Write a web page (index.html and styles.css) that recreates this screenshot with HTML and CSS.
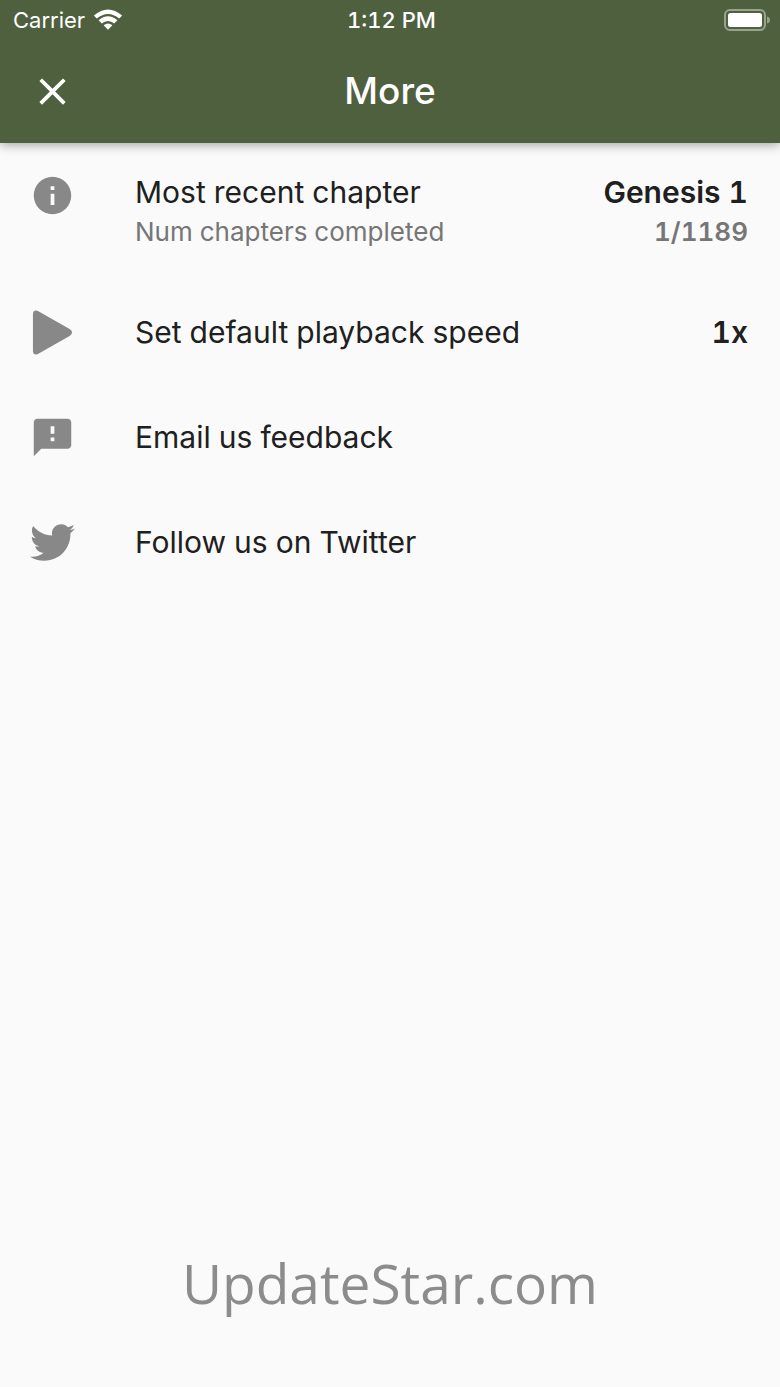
FILE: index.html
```html
<!DOCTYPE html>
<html lang="en">
<head>
<meta charset="utf-8">
<meta name="viewport" content="width=device-width, initial-scale=1">
<title>More</title>
<link rel="stylesheet" href="styles.css">
</head>
<body>
<div class="screen">
  <header class="top">
    <div class="status">
      <div class="carrier">
        <span>Carrier</span>
        <svg class="wifi" viewBox="0 0 30 22" aria-hidden="true">
          <path d="M.8 6.500Q15-5.500 29.200 6.500L26.200 9.600Q15 .6 3.800 9.600Z"/>
          <path d="M5.600 11.200Q15 3.400 24.400 11.200L21.200 14.500Q15 9.400 8.800 14.500Z"/>
          <path d="M10.600 16.300Q15 12.600 19.400 16.300L15 20.800Z"/>
        </svg>
      </div>
      <span class="time">1:12 PM</span>
      <svg class="battery" viewBox="0 0 46 22" aria-hidden="true">
        <rect class="battery-case" x="1" y="1" width="40" height="20" rx="5"/>
        <rect x="4" y="4" width="34" height="14" rx="2.500"/>
        <path class="battery-tip" d="M43 7.500Q46 8.500 46 11T43 14.500Z"/>
      </svg>
    </div>
    <div class="bar">
      <button class="close" type="button" aria-label="Close">
        <svg class="icon" viewBox="0 0 24 24" aria-hidden="true"><path d="M19 6.410L17.590 5 12 10.590 6.410 5 5 6.410 10.590 12 5 17.590 6.410 19 12 13.410 17.590 19 19 17.590 13.410 12z"/></svg>
      </button>
      <h1 class="title">More</h1>
    </div>
  </header>
  <main class="list">
    <div class="row row-tall">
      <svg class="icon" viewBox="0 0 24 24" aria-hidden="true"><path d="M12 2C6.480 2 2 6.480 2 12s4.480 10 10 10 10-4.480 10-10S17.520 2 12 2zm1 15h-2v-6h2v6zm0-8h-2V7h2v2z"/></svg>
      <div class="text">
        <div class="line"><span>Most recent chapter</span><strong>Genesis 1</strong></div>
        <div class="line line-small"><span>Num chapters completed</span><strong>1/1189</strong></div>
      </div>
    </div>
    <button class="row" type="button">
      <svg class="icon" viewBox="0 0 44 46" aria-hidden="true"><path d="M2 4.500Q2 .5 5 .5Q6.500.5 8 1.500L39.500 19.500Q42 21 42 23T39.500 26.500L8 44.500Q6.500 45.500 5 45.500Q2 45.500 2 41.500Z"/></svg>
      <span class="line"><span>Set default playback speed</span><strong>1x</strong></span>
    </button>
    <a class="row" href="#feedback">
      <svg class="icon" viewBox="0 0 24 24" aria-hidden="true"><path d="M20 2H4c-1.100 0-1.990.9-1.990 2L2 22l4-4h14c1.100 0 2-.9 2-2V4c0-1.100-.9-2-2-2zm-7 12h-2v-2h2v2zm0-4h-2V6h2v4z"/></svg>
      <span class="line">Email us feedback</span>
    </a>
    <a class="row" href="#twitter">
      <svg class="icon" viewBox="0 0 512 512" aria-hidden="true"><path d="M459.370 151.716c.325 4.548.325 9.097.325 13.645 0 138.720-105.583 298.558-298.558 298.558-59.452 0-114.680-17.219-161.137-47.106 8.447.974 16.568 1.299 25.340 1.299 49.055 0 94.213-16.568 130.274-44.832-46.132-.975-84.792-31.188-98.112-72.772 6.498.974 12.995 1.624 19.818 1.624 9.421 0 18.843-1.300 27.614-3.573-48.081-9.747-84.143-51.980-84.143-102.985v-1.299c13.969 7.797 30.214 12.670 47.431 13.319-28.264-18.843-46.781-51.005-46.781-87.391 0-19.492 5.197-37.360 14.294-52.954 51.655 63.675 129.300 105.258 216.365 109.807-1.624-7.797-2.599-15.918-2.599-24.040 0-57.828 46.782-104.934 104.934-104.934 30.213 0 57.502 12.670 76.670 33.137 23.715-4.548 46.456-13.320 66.599-25.340-7.798 24.366-24.366 44.833-46.132 57.827 21.117-2.273 41.584-8.122 60.426-16.243-14.292 20.791-32.161 39.308-52.628 54.253z"/></svg>
      <span class="line">Follow us on Twitter</span>
    </a>
  </main>
  <footer class="mark">UpdateStar.com</footer>
</div>
</body>
</html>
```
FILE: styles.css
```css
* {
  box-sizing: border-box;
}

body {
  margin: 0;
  background: #fafafa;
  color: #202020;
  font-family: Inter, "Liberation Sans", sans-serif;
  font-variant-numeric: tabular-nums;
}

.screen {
  min-height: 100vh;
  display: flex;
  flex-direction: column;
}

.top {
  background: #4f603e;
  color: #fff;
  box-shadow: 0 2px 10px rgba(0, 0, 0, 0.35);
}

.status {
  height: 39px;
  padding: 0 10px 0 13px;
  display: grid;
  grid-template-columns: 1fr auto 1fr;
  align-items: center;
  font-size: 22px;
}

.carrier {
  display: flex;
  align-items: center;
  gap: 8px;
}

.time {
  font-weight: 500;
}

.wifi {
  width: 30px;
  height: 22px;
  fill: currentColor;
}

.battery {
  width: 46px;
  height: 22px;
  justify-self: end;
  fill: currentColor;
}

.battery-case {
  fill: none;
  stroke: #98a28d;
  stroke-width: 2;
}

.battery-tip {
  fill: #98a28d;
}

.bar {
  display: grid;
  grid-template-columns: 1fr auto 1fr;
  align-items: center;
  height: 104px;
  padding: 0 30px;
}

.close {
  justify-self: start;
  display: flex;
  padding: 0;
  border: 0;
  background: none;
  color: inherit;
}

.title {
  margin: 0;
  font-size: 37px;
  font-weight: 500;
  line-height: 44px;
}

.list {
  display: flex;
  flex-direction: column;
}

.row {
  display: flex;
  align-items: center;
  gap: 60px;
  width: 100%;
  min-height: 105px;
  padding: 0 32px 0 30px;
  border: 0;
  background: none;
  color: inherit;
  font: inherit;
  font-variant-numeric: inherit;
  text-align: left;
  text-decoration: none;
}

.row-tall {
  align-items: flex-start;
  min-height: 137px;
  padding-top: 30px;
}

.icon {
  flex: none;
  width: 45px;
  height: 45px;
  fill: currentColor;
}

.row .icon {
  fill: #888;
}

.text {
  flex: 1;
}

.line {
  flex: 1;
  display: flex;
  justify-content: space-between;
  gap: 16px;
  font-size: 30px;
  line-height: 39px;
}

.line-small {
  color: #767676;
  font-size: 26px;
}

.line strong {
  font-weight: 600;
}

.mark {
  margin-top: auto;
  padding-bottom: 64px;
  color: #8c8c8c;
  font-family: "Open Sans", "Noto Sans", sans-serif;
  font-size: 55px;
  line-height: 80px;
  text-align: center;
}
```
